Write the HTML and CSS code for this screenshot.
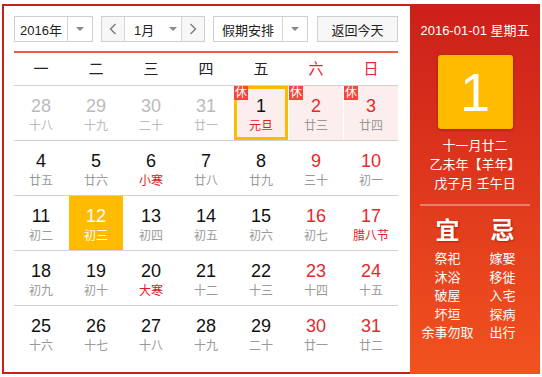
FILE: index.html
```html
<!DOCTYPE html>
<html lang="zh-CN">

<head>
  <meta charset="UTF-8">
  <title>万年历</title>
  <link rel="stylesheet" href="styles.css">
</head>

<body>
  <div class="calendar">
    <div class="main">
      <!-- toolbar -->
      <div class="toolbar">
        <div class="select year">
          <span class="select-text">2016年</span>
          <span class="select-arrow"><i class="caret"></i></span>
        </div>
        <div class="month-group">
          <span class="nav-btn">
            <svg width="8" height="12" viewBox="0 0 8 12"><polyline points="6.5,1 1.5,6 6.5,11" fill="none" stroke="#777" stroke-width="1.3"/></svg>
          </span>
          <span class="month">1月<i class="caret"></i></span>
          <span class="nav-btn">
            <svg width="8" height="12" viewBox="0 0 8 12"><polyline points="1.5,1 6.5,6 1.5,11" fill="none" stroke="#777" stroke-width="1.3"/></svg>
          </span>
        </div>
        <div class="select holiday">
          <span class="select-text">假期安排</span>
          <span class="select-arrow"><i class="caret"></i></span>
        </div>
        <button class="today-btn">返回今天</button>
      </div>

      <!-- week header -->
      <div class="week-head">
        <span>一</span><span>二</span><span>三</span><span>四</span><span>五</span>
        <span class="red">六</span><span class="red">日</span>
      </div>

      <!-- days -->
      <div class="week">
        <div class="day other"><b>28</b><small>十八</small></div>
        <div class="day other"><b>29</b><small>十九</small></div>
        <div class="day other"><b>30</b><small>二十</small></div>
        <div class="day other"><b>31</b><small>廿一</small></div>
        <div class="day rest selected"><span class="badge">休</span><b>1</b><small class="fest">元旦</small></div>
        <div class="day rest weekend"><span class="badge">休</span><b>2</b><small>廿三</small></div>
        <div class="day rest weekend"><span class="badge">休</span><b>3</b><small>廿四</small></div>
      </div>
      <div class="week">
        <div class="day"><b>4</b><small>廿五</small></div>
        <div class="day"><b>5</b><small>廿六</small></div>
        <div class="day"><b>6</b><small class="fest">小寒</small></div>
        <div class="day"><b>7</b><small>廿八</small></div>
        <div class="day"><b>8</b><small>廿九</small></div>
        <div class="day weekend"><b>9</b><small>三十</small></div>
        <div class="day weekend"><b>10</b><small>初一</small></div>
      </div>
      <div class="week">
        <div class="day"><b>11</b><small>初二</small></div>
        <div class="day today"><b>12</b><small>初三</small></div>
        <div class="day"><b>13</b><small>初四</small></div>
        <div class="day"><b>14</b><small>初五</small></div>
        <div class="day"><b>15</b><small>初六</small></div>
        <div class="day weekend"><b>16</b><small>初七</small></div>
        <div class="day weekend"><b>17</b><small class="fest">腊八节</small></div>
      </div>
      <div class="week">
        <div class="day"><b>18</b><small>初九</small></div>
        <div class="day"><b>19</b><small>初十</small></div>
        <div class="day"><b>20</b><small class="fest">大寒</small></div>
        <div class="day"><b>21</b><small>十二</small></div>
        <div class="day"><b>22</b><small>十三</small></div>
        <div class="day weekend"><b>23</b><small>十四</small></div>
        <div class="day weekend"><b>24</b><small>十五</small></div>
      </div>
      <div class="week last">
        <div class="day"><b>25</b><small>十六</small></div>
        <div class="day"><b>26</b><small>十七</small></div>
        <div class="day"><b>27</b><small>十八</small></div>
        <div class="day"><b>28</b><small>十九</small></div>
        <div class="day"><b>29</b><small>二十</small></div>
        <div class="day weekend"><b>30</b><small>廿一</small></div>
        <div class="day weekend"><b>31</b><small>廿二</small></div>
      </div>
    </div>

    <!-- side panel -->
    <div class="side">
      <div class="side-date">2016-01-01 星期五</div>
      <div class="big-day">1</div>
      <div class="lunar">
        <p>十一月廿二</p>
        <p>乙未年【羊年】</p>
        <p>戊子月 壬午日</p>
      </div>
      <div class="almanac">
        <div class="col">
          <h4>宜</h4>
          <p>祭祀</p>
          <p>沐浴</p>
          <p>破屋</p>
          <p>坏垣</p>
          <p>余事勿取</p>
        </div>
        <div class="col">
          <h4>忌</h4>
          <p>嫁娶</p>
          <p>移徙</p>
          <p>入宅</p>
          <p>探病</p>
          <p>出行</p>
        </div>
      </div>
    </div>
  </div>
</body>

</html>
```

FILE: styles.css
```css
body {
  margin: 4px 0 0 2px;
  font-family: "Liberation Sans", Arial, "Noto Sans CJK SC", sans-serif;
  background: #fff;
}

.calendar {
  display: flex;
  width: 536px;
  height: 366px;
  border: 2px solid #cc1f1a;
  border-right: none;
}

.main {
  width: 384px;
  padding: 10px 12px 0 10px;
}

/* toolbar */
.toolbar {
  display: flex;
  height: 26px;
}

.select,
.month-group,
.today-btn {
  box-sizing: border-box;
  height: 26px;
  border: 1px solid #cfcfcf;
  display: flex;
  align-items: stretch;
  font-size: 13px;
  color: #222;
  white-space: nowrap;
}

.year {
  width: 79px;
}

.holiday {
  width: 95px;
  margin-left: 8px;
}

.select-text {
  flex: 1;
  display: flex;
  align-items: center;
  justify-content: center;
}

.select-arrow {
  width: 24px;
  border-left: 1px solid #d6d6d6;
  display: flex;
  align-items: center;
  justify-content: center;
}

.caret {
  display: inline-block;
  width: 0;
  height: 0;
  border-left: 4px solid transparent;
  border-right: 4px solid transparent;
  border-top: 4px solid #888;
}

.month-group {
  width: 104px;
  margin-left: 8px;
}

.nav-btn {
  width: 22px;
  flex: none;
  background: #f7f7f7;
  display: flex;
  align-items: center;
  justify-content: center;
}

.month {
  flex: 1;
  min-width: 0;
  border-left: 1px solid #d6d6d6;
  border-right: 1px solid #d6d6d6;
  display: flex;
  align-items: center;
  padding-left: 9px;
}

.month .caret {
  margin-left: 15px;
}

.today-btn {
  width: 81px;
  margin-left: 9px;
  background: #f7f7f7;
  justify-content: center;
  align-items: center;
  font-family: inherit;
  padding: 0;
}

/* week header */
.week-head,
.week {
  display: grid;
  grid-template-columns: repeat(7, 54px);
  column-gap: 1px;
}

.week-head {
  margin-top: 9px;
  border-top: 2px solid #f25a4a;
  border-bottom: 1px solid #d0d0d0;
  height: 32px;
  line-height: 32px;
  text-align: center;
  font-size: 15px;
  color: #222;
}

.red {
  color: #e0282a;
}

.week {
  border-bottom: 1px solid #d0d0d0;
  height: 54px;
}

.week.last {
  border-bottom: none;
}

.day {
  position: relative;
  box-sizing: border-box;
  text-align: center;
  padding-top: 10px;
}

.day b {
  display: block;
  font-weight: normal;
  font-size: 18px;
  line-height: 20px;
  color: #111;
}

.day small {
  display: block;
  margin-top: 2px;
  font-size: 12px;
  line-height: 16px;
  color: #999;
}

.day.other b,
.day.other small {
  color: #bbb;
}

.day.weekend b {
  color: #e5292b;
}

.day small.fest {
  color: #e02020;
}

.day.rest {
  background: #fdeeee;
}

.day.selected {
  border: 3px solid #ffbb00;
  padding-top: 7px;
}

.day.today {
  background: #ffbb00;
}

.day.today b,
.day.today small {
  color: #fff;
}

.badge {
  position: absolute;
  left: 0;
  top: 0;
  width: 14px;
  height: 14px;
  line-height: 14px;
  font-size: 12px;
  color: #fff;
  background: #f5463a;
  text-align: center;
}

.day.selected .badge {
  left: -3px;
  top: -3px;
}

/* side panel */
.side {
  width: 130px;
  margin: -2px 0;
  background: linear-gradient(#cc1f1a, #f2521f);
  color: #fff;
  text-align: center;
  font-size: 13px;
}

.side-date {
  margin-top: 17px;
  line-height: 20px;
}

.big-day {
  width: 75px;
  height: 74px;
  margin: 14px auto 0;
  background: #ffbb00;
  border-radius: 3px;
  box-shadow: 0 1px 3px rgba(120, 0, 0, 0.45);
  font-size: 54px;
  line-height: 74px;
}

.lunar {
  margin-top: 7px;
  padding-bottom: 11px;
  margin-left: 10px;
  margin-right: 10px;
  border-bottom: 2px solid rgba(255, 255, 255, 0.35);
}

.lunar p,
.almanac p {
  margin: 0;
  line-height: 19px;
}

.almanac {
  display: flex;
  justify-content: center;
  margin-top: 10px;
}

.almanac .col {
  width: 55px;
}

.almanac h4 {
  margin: 0 0 4px;
  font-size: 24px;
  line-height: 30px;
  font-weight: bold;
  text-shadow: 1px 1px 2px rgba(120, 0, 0, 0.5);
}

.almanac p {
  line-height: 18.5px;
}
```
